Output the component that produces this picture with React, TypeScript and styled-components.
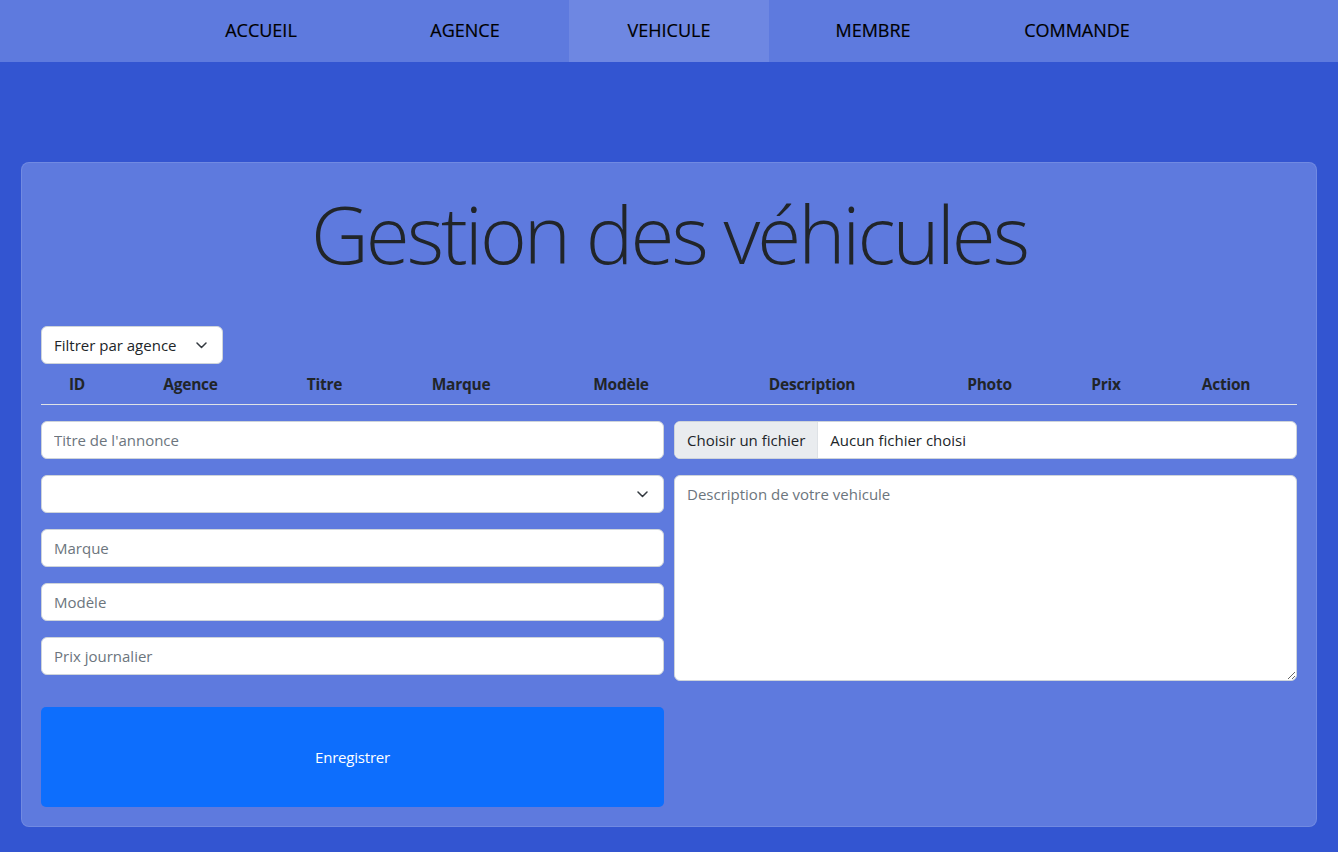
import React from "react";
import styled, { createGlobalStyle } from "styled-components";

const GlobalStyle = createGlobalStyle`
  html, body { margin: 0; padding: 0; }
  body {
    background: #3355d1;
    font-family: "Open Sans", "Noto Sans", sans-serif;
    font-size: 16px;
    line-height: 1.5;
    color: #212529;
  }
  * { box-sizing: border-box; }
`;

const NavBar = styled.nav`
  height: 62px;
  background: #5e7ade;
  display: flex;
  justify-content: center;
  gap: 4px;
`;

const NavItem = styled.a<{ $active?: boolean }>`
  width: 200px;
  display: flex;
  align-items: center;
  justify-content: center;
  padding-bottom: 2px;
  color: #000;
  text-decoration: none;
  font-size: 18px;
  letter-spacing: 0;
  -webkit-text-stroke: 0.2px #000;
  background: ${(p) => (p.$active ? "#6e87e2" : "transparent")};
`;

const Card = styled.section`
  margin: 100px 21px 0;
  background: #5e7ade;
  border: 1px solid rgba(255, 255, 255, 0.12);
  border-radius: 8px;
  padding: 19px 19px 19px;
`;

const Title = styled.h1`
  margin: 3px 0 45px;
  text-align: center;
  font-size: 80px;
  font-weight: 300;
  line-height: 96px;
  color: #212529;
  letter-spacing: -3px;
`;

const SelectWrap = styled.div<{ $width?: string }>`
  position: relative;
  width: ${(p) => p.$width || "100%"};
`;

const Select = styled.select`
  appearance: none;
  width: 100%;
  height: 38px;
  padding: 6px 36px 6px 12px;
  font: inherit;
  font-size: 15px;
  color: #212529;
  background: #fff;
  border: 1px solid #ced4da;
  border-radius: 6px;
  outline: none;
`;

const Chevron = styled.svg`
  position: absolute;
  right: 16px;
  top: 16px;
  width: 11px;
  height: 7px;
  pointer-events: none;
`;

const HeaderRow = styled.div`
  display: grid;
  grid-template-columns: 72px 155px 113px 160px 160px 222px 133px 100px 140px;
  border-bottom: 1px solid #dee2e6;
  margin-bottom: 16px;
`;

const HeaderCell = styled.div`
  padding: 8px 0;
  text-align: center;
  font-weight: 700;
  font-size: 15.5px;
  letter-spacing: -0.25px;
  line-height: 24px;
  color: #212529;
`;

const FormGrid = styled.div`
  display: grid;
  grid-template-columns: 1fr 1fr;
  column-gap: 10px;
  align-items: start;
`;

const Column = styled.div`
  display: flex;
  flex-direction: column;
  gap: 16px;
`;

const Input = styled.input`
  width: 100%;
  height: 38px;
  padding: 6px 12px;
  font: inherit;
  font-size: 15px;
  color: #212529;
  background: #fff;
  border: 1px solid #ced4da;
  border-radius: 6px;
  outline: none;
  &::placeholder { color: #6c757d; }
`;

const FileBox = styled.label`
  display: flex;
  height: 38px;
  background: #fff;
  border: 1px solid #ced4da;
  border-radius: 6px;
  overflow: hidden;
  font-size: 15px;
  color: #212529;
`;

const FileButton = styled.span`
  display: flex;
  align-items: center;
  padding: 0 12px;
  background: #e9ecef;
  border-right: 1px solid #dee2e6;
`;

const FileName = styled.span`
  display: flex;
  align-items: center;
  padding: 0 12px;
`;

const TextArea = styled.textarea`
  width: 100%;
  height: 206px;
  padding: 7px 12px;
  font: inherit;
  font-size: 15px;
  color: #212529;
  background: #fff;
  border: 1px solid #ced4da;
  border-radius: 6px;
  outline: none;
  resize: vertical;
  display: block;
  &::placeholder { color: #6c757d; }
`;

const ButtonRow = styled.div`
  display: grid;
  grid-template-columns: 1fr 1fr;
  column-gap: 10px;
  margin-top: 26px;
`;

const SubmitButton = styled.button`
  height: 100px;
  background: #0d6efd;
  color: #fff;
  border: none;
  border-radius: 5px;
  font: inherit;
  font-size: 15px;
  letter-spacing: -0.2px;
  cursor: pointer;
`;

const ChevronIcon = () => (
  <Chevron viewBox="0 0 11 7">
    <path d="M1 1l4.5 4.5L10 1" fill="none" stroke="#343a40" strokeWidth="1.5" strokeLinecap="round" strokeLinejoin="round" />
  </Chevron>
);

const navItems = ["ACCUEIL", "AGENCE", "VEHICULE", "MEMBRE", "COMMANDE"];
const headers = ["ID", "Agence", "Titre", "Marque", "Modèle", "Description", "Photo", "Prix", "Action"];

export default function App() {
  return (
    <>
      <GlobalStyle />
      <NavBar>
        {navItems.map((n) => (
          <NavItem key={n} href="#" $active={n === "VEHICULE"}>
            {n}
          </NavItem>
        ))}
      </NavBar>
      <Card>
        <Title>Gestion des véhicules</Title>
        <SelectWrap $width="182px">
          <Select defaultValue="">
            <option value="">Filtrer par agence</option>
          </Select>
          <ChevronIcon />
        </SelectWrap>
        <HeaderRow>
          {headers.map((h) => (
            <HeaderCell key={h}>{h}</HeaderCell>
          ))}
        </HeaderRow>
        <FormGrid>
          <Column>
            <Input placeholder="Titre de l'annonce" />
            <SelectWrap>
              <Select defaultValue="">
                <option value=""></option>
              </Select>
              <ChevronIcon />
            </SelectWrap>
            <Input placeholder="Marque" />
            <Input placeholder="Modèle" />
            <Input placeholder="Prix journalier" />
          </Column>
          <Column>
            <FileBox>
              <FileButton>Choisir un fichier</FileButton>
              <FileName>Aucun fichier choisi</FileName>
            </FileBox>
            <TextArea placeholder="Description de votre vehicule" />
          </Column>
        </FormGrid>
        <ButtonRow>
          <SubmitButton type="button">Enregistrer</SubmitButton>
        </ButtonRow>
      </Card>
    </>
  );
}
